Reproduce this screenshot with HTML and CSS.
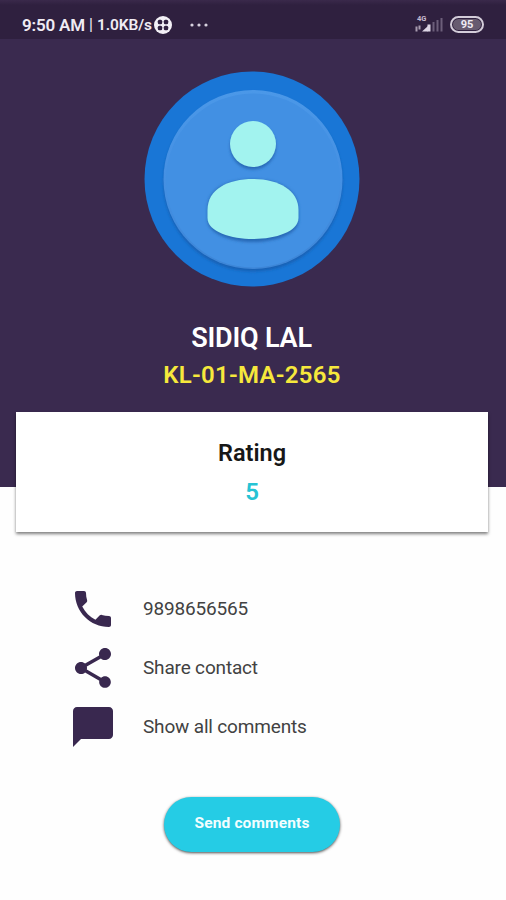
FILE: index.html
```html
<!DOCTYPE html>
<html lang="en">
<head>
<meta charset="utf-8">
<title>Contact profile</title>
<link rel="stylesheet" href="styles.css">
</head>
<body>
<header class="hero">
  <div class="status">
    <span class="time">9:50 AM</span><span class="divider">|</span><span class="speed">1.0KB/s</span>
    <svg class="app-icon" viewBox="0 0 18 18" width="18" height="18"><circle cx="9" cy="9" r="9" fill="#f3f0f6"/><g fill="#30203f"><rect x="3.8" y="3.8" width="4.4" height="4.4" rx="1.5"/><rect x="9.8" y="3.8" width="4.4" height="4.4" rx="1.5"/><rect x="3.8" y="9.8" width="4.4" height="4.4" rx="1.5"/><rect x="9.8" y="9.8" width="4.4" height="4.4" rx="1.5"/></g></svg>
    <svg class="dots" viewBox="0 0 18 4" width="18" height="4" fill="#d8d2df"><circle cx="2" cy="2" r="1.6"/><circle cx="9" cy="2" r="1.6"/><circle cx="16" cy="2" r="1.6"/></svg>
    <span class="network"><span class="generation">4G</span>
      <svg viewBox="0 0 28 16" width="28" height="16"><g fill="#ddd5e5"><path d="M7 14.500 13 9v5.500z"/><rect x="12.500" y="7.500" width="3" height="7"/></g><g fill="#a79aaf"><rect x="0.500" y="9.500" width="2" height="5"/><rect x="3.500" y="8.500" width="2" height="4"/></g><g fill="#6c5e7a"><rect x="17.500" y="5" width="2" height="9.500"/><rect x="21.500" y="3" width="2" height="11.500"/><rect x="25.500" y="1" width="2" height="13.500"/></g></svg>
    </span>
    <span class="battery">95</span>
  </div>
  <svg class="avatar" viewBox="0 0 216 216" width="216" height="216">
    <defs>
      <filter id="soft" x="-20%" y="-20%" width="140%" height="150%"><feGaussianBlur stdDeviation="1.8"/></filter>
      <linearGradient id="rim" x1="0" y1="0" x2="0" y2="1"><stop offset="0" stop-color="#4b98e8"/><stop offset=".5" stop-color="#4590e3"/><stop offset="1" stop-color="#3d85d6"/></linearGradient>
    </defs>
    <circle cx="108" cy="108" r="107.500" fill="#1976d6"/>
    <circle cx="109" cy="111" r="89.500" fill="#1260b4" filter="url(#soft)"/>
    <circle cx="109" cy="108.500" r="89.500" fill="url(#rim)"/>
    <circle cx="109" cy="109.500" r="87" fill="#4290e3"/>
    <g fill="#2768b5" filter="url(#soft)"><circle cx="109" cy="75.500" r="23"/><path d="M63.500 138C63.500 116 86 108.500 109 108.500s45.500 8 45.500 31v10c0 14-24 21.500-45.500 21.500s-45.500-8-45.500-22z"/></g>
    <g fill="#a2f3ef"><circle cx="109" cy="73" r="23"/><path d="M63.500 139C63.500 118 84 108 109 108s45.500 11 45.500 31v8c0 14-24 21-45.500 21s-45.500-7-45.500-21z"/></g>
  </svg>
  <h1 class="name">SIDIQ LAL</h1>
  <p class="plate">KL-01-MA-2565</p>
</header>
<main>
  <section class="rating">
    <h2 class="rating-title">Rating</h2>
    <p class="score">5</p>
  </section>
  <ul class="actions">
    <li><svg class="icon" viewBox="0 0 24 24"><path d="M6.620 10.790c1.440 2.830 3.760 5.140 6.590 6.590l2.200-2.200c.27-.27.67-.36 1.020-.24 1.120.37 2.330.57 3.570.57.55 0 1 .45 1 1V20c0 .55-.45 1-1 1-9.390 0-17-7.610-17-17 0-.55.45-1 1-1h3.500c.55 0 1 .45 1 1 0 1.250.2 2.450.57 3.570.11.35.03.74-.25 1.020l-2.200 2.200z"/></svg><span>9898656565</span></li>
    <li><svg class="icon" viewBox="0 0 24 24"><path d="M18 16.080c-.76 0-1.440.3-1.960.77L8.910 12.700c.05-.23.09-.46.09-.7s-.04-.47-.09-.7l7.050-4.110c.54.5 1.250.81 2.040.81 1.660 0 3-1.340 3-3s-1.340-3-3-3-3 1.340-3 3c0 .24.04.47.09.7L8.040 9.810C7.500 9.310 6.790 9 6 9c-1.660 0-3 1.340-3 3s1.340 3 3 3c.79 0 1.500-.31 2.040-.81l7.120 4.160c-.05.21-.08.43-.08.65 0 1.610 1.310 2.920 2.920 2.920s2.920-1.310 2.920-2.920-1.310-2.920-2.920-2.920z"/></svg><span>Share contact</span></li>
    <li><svg class="icon" viewBox="0 0 24 24"><path d="M20 2H4c-1.100 0-2 .9-2 2v18l4-4h14c1.100 0 2-.9 2-2V4c0-1.100-.9-2-2-2z"/></svg><span>Show all comments</span></li>
  </ul>
  <button class="send" type="button">Send comments</button>
</main>
</body>
</html>
```
FILE: styles.css
```css
* { box-sizing: border-box; }
body { margin: 0; height: 900px; background: #fefefe; font-family: Roboto, sans-serif; overflow: hidden; }
h1, h2, p, ul { margin: 0; padding: 0; }
.hero { height: 487px; background: #3a2a4f; display: flex; flex-direction: column; align-items: center; }
.status { width: 100%; height: 39px; background: linear-gradient(#3a294b 0, #2f203f 5px); display: flex; align-items: center; padding: 10px 22px 0 22px; color: #f0ecf4; line-height: 20px; flex: none; }
.time { font-size: 17px; font-weight: 600; width: 66px; white-space: nowrap; letter-spacing: -.2px; }
.divider { font-size: 16px; width: 9px; padding-left: 1px; }
.speed { font-size: 15.500px; font-weight: 600; width: 55px; white-space: nowrap; letter-spacing: -.1px; }
.app-icon { margin-left: 2px; flex: none; }
.dots { margin-left: 18px; flex: none; }
.network { margin-left: auto; width: 28px; height: 20px; display: grid; }
.network > * { grid-area: 1 / 1; }
.network svg { margin-top: 2px; }
.generation { font-size: 7.500px; line-height: 8px; font-weight: 700; padding-left: 2px; color: #c6bacf; }
.battery { margin-left: 7px; width: 34px; height: 17px; border: 2px solid #d3ccd9; border-radius: 9px; background: #675b70; background-clip: content-box; padding: 1px; font-size: 11px; font-weight: 700; line-height: 11px; text-align: center; }
.avatar { margin: 32px 2px 0 0; flex: none; }
.name { margin: 34px 3px 0 0; font-size: 27px; line-height: 34px; font-weight: 600; color: #fff; letter-spacing: -.2px; }
.plate { margin: 5px 2px 0 0; font-size: 24px; line-height: 30px; font-weight: 600; color: #f6e83c; letter-spacing: .25px; }
.rating { position: relative; margin: -75px 18px 0 16px; height: 120px; background: #fff; box-shadow: 0 2px 3px rgba(0,0,0,.5); text-align: center; padding-top: 27px; }
.rating-title { font-size: 23.500px; line-height: 28px; font-weight: 600; color: #171717; }
.score { margin-top: 11px; font-size: 24px; line-height: 28px; font-weight: 600; color: #26c3d4; }
.actions { list-style: none; margin: 53px 0 0 69px; display: flex; flex-direction: column; gap: 11px; }
.actions li { height: 48px; display: flex; align-items: center; gap: 26px; font-size: 19px; color: #424242; white-space: nowrap; letter-spacing: -.17px; }
.actions span { padding-bottom: 1px; }
.icon { width: 48px; height: 48px; fill: #39284f; flex: none; }
.send { display: block; margin: 46px auto 0 164px; width: 176px; height: 55px; border: 0; border-radius: 28px; background: #25cce5; color: #f2feff; font: 700 15.500px/53px Roboto, sans-serif; padding: 0 0 2px; letter-spacing: .15px; box-shadow: 0 1px 3px rgba(0,0,0,.7); }
```
